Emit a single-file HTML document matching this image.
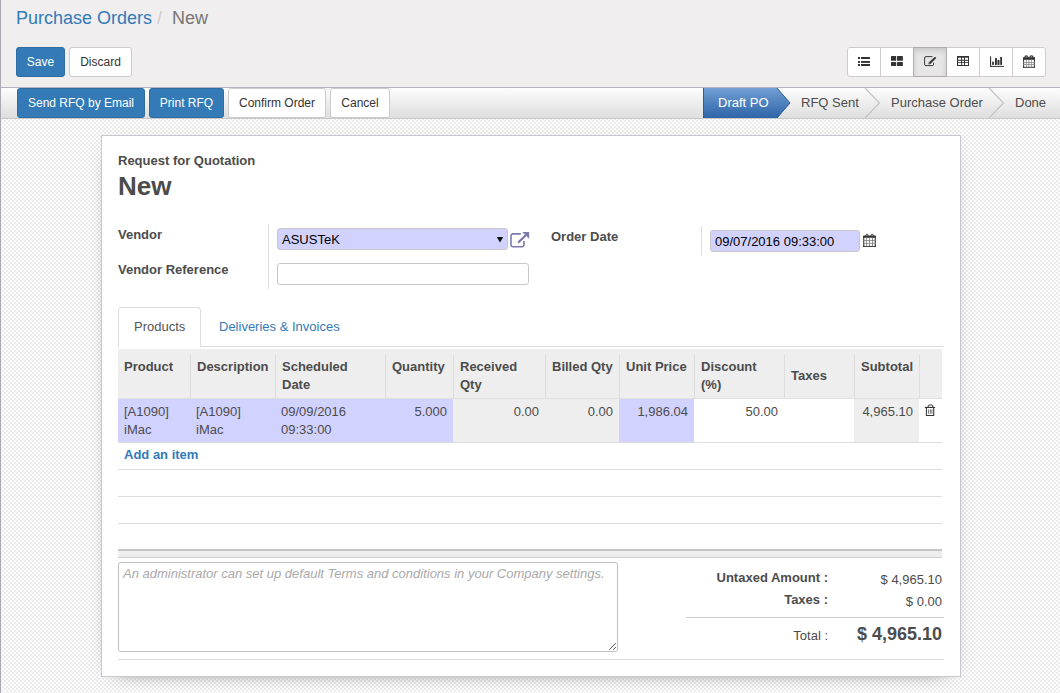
<!DOCTYPE html>
<html><head><meta charset="utf-8">
<style>
*{box-sizing:border-box;}
html,body{margin:0;padding:0;}
body{width:1060px;height:693px;overflow:hidden;position:relative;font-family:"Liberation Sans",sans-serif;font-size:13px;color:#4c4c4c;background:#fff;}
.a{position:absolute;}
.t{position:absolute;white-space:nowrap;line-height:18px;}
.b{font-weight:bold;}
.cp{left:1px;top:0;width:1059px;height:87px;background:#f0eeee;}
.leftb{left:0;top:0;width:1px;height:693px;background:#a9a9b1;}
.btn{position:absolute;height:30px;border:1px solid #ccc;border-radius:3px;font-size:12px;line-height:28px;text-align:center;white-space:nowrap;background:#fff;color:#333;}
.btnp{background:#337ab7;border-color:#2e6da4;color:#fff;}
.sbar{left:1px;top:88px;width:1059px;height:30px;background:linear-gradient(#fdfdfd,#dedede);}
.bg{left:1px;top:119px;width:1059px;height:574px;background-color:#fff;background-image:linear-gradient(45deg,#ebebeb 25%,transparent 25%,transparent 75%,#ebebeb 75%),linear-gradient(45deg,#ebebeb 25%,transparent 25%,transparent 75%,#ebebeb 75%);}
.sheet{left:101px;top:135px;width:860px;height:542px;background:#fff;border:1px solid #c8c8d3;box-shadow:0 5px 20px -15px #000;}
.inp{position:absolute;border:1px solid #c8c8c8;border-radius:3px;background:#fff;}
.req{background:#d2d2ff;}
.hl{position:absolute;height:1px;background:#ddd;}
.vl{position:absolute;width:1px;background:#ddd;}
.cell{position:absolute;}
.r{text-align:right;}
</style></head><body>
<div class="a leftb"></div>
<div class="a cp"></div>
<div class="a" style="left:1px;top:87px;width:1059px;height:1px;background:#b3b3bb"></div>
<!-- breadcrumb -->
<div class="t" style="left:16px;top:9px;font-size:18px;"><span style="color:#337ab7">Purchase Orders</span><span style="color:#ccc;padding:0 5px">/&nbsp;</span><span style="color:#777">New</span></div>
<div class="btn btnp" style="left:16px;top:47px;width:49px;">Save</div>
<div class="btn" style="left:69px;top:47px;width:63px;">Discard</div>
<!-- view switcher -->
<div class="a" style="left:847px;top:47px;width:199px;height:30px;border:1px solid #ccc;border-radius:3px;background:#fff;"></div>
<div class="a" style="left:913px;top:47px;width:34px;height:30px;background:#e6e6e6;border:1px solid #adadad;box-shadow:inset 0 3px 5px rgba(0,0,0,.125);"></div>
<div class="vl" style="left:880px;top:48px;height:28px;background:#ccc"></div>
<div class="vl" style="left:979px;top:48px;height:28px;background:#ccc"></div>
<div class="vl" style="left:1012px;top:48px;height:28px;background:#ccc"></div>
<svg class="a" style="left:0;top:0" width="1060" height="87" viewBox="0 0 1060 87">
 <g fill="#333">
  <!-- list -->
  <rect x="858" y="57" width="2" height="2"/><rect x="861" y="57" width="9" height="2"/>
  <rect x="858" y="61" width="2" height="1.9"/><rect x="861" y="61" width="9" height="1.9"/>
  <rect x="858" y="64" width="2" height="2"/><rect x="861" y="64" width="9" height="2"/>
  <!-- kanban -->
  <rect x="891" y="56" width="5.2" height="4.8" rx="0.5"/><rect x="897" y="56" width="5.9" height="4.8" rx="0.5"/>
  <rect x="891" y="62" width="5.2" height="4" rx="0.5"/><rect x="897" y="62" width="5.9" height="4" rx="0.5"/>
  <!-- edit -->
  <path d="M932.5 56.6H926a1.4 1.4 0 0 0-1.4 1.4v6.2a1.4 1.4 0 0 0 1.4 1.4h6.2a1.4 1.4 0 0 0 1.4-1.4V62.8" fill="none" stroke="#333" stroke-width="0.95"/>
  <path d="M935 56.7l1.3 1.3-6 6-2 0.5 0.5-2z"/>
  <circle cx="929.2" cy="63" r="0.45" fill="#ddd"/>
  <!-- table -->
  <rect x="957" y="56" width="12" height="1.7"/>
  <rect x="957" y="56" width="1.1" height="10"/><rect x="968" y="56" width="1" height="10"/>
  <rect x="957" y="65" width="12" height="1"/>
  <rect x="961.1" y="56" width="1" height="10"/><rect x="964" y="56" width="1" height="10"/>
  <rect x="957" y="59.8" width="12" height="1"/><rect x="957" y="62" width="12" height="0.8"/>
  <!-- chart -->
  <rect x="990" y="56.3" width="1.1" height="10.6"/><rect x="990" y="65.9" width="14" height="1"/>
  <rect x="992.1" y="61.7" width="1.8" height="3.2"/><rect x="995" y="58.1" width="1.9" height="6.8"/><rect x="997.5" y="59.9" width="2" height="5"/><rect x="1000.2" y="56.9" width="1.8" height="8"/>
  <!-- calendar -->
  <rect x="1023.1" y="57.2" width="11.8" height="2.5" rx="0.5"/>
  <rect x="1023.1" y="57.5" width="1" height="10.3"/><rect x="1033.9" y="57.5" width="1" height="10.3"/>
  <rect x="1023.1" y="66.8" width="11.8" height="1"/>
  <g fill="#888"><rect x="1023" y="62.1" width="12" height="0.8"/><rect x="1023" y="64.2" width="12" height="0.8"/>
  <rect x="1025.9" y="59.7" width="0.8" height="7.5"/><rect x="1028.5" y="59.7" width="0.8" height="7.5"/><rect x="1030.9" y="59.7" width="0.8" height="7.5"/></g>
  <path d="M1024.9 59.5V57.4a1.5 1.5 0 0 1 3 0V59.5M1030 59.5V57.4a1.5 1.5 0 0 1 3 0V59.5" fill="none" stroke="#333" stroke-width="1.2"/>
 </g>
</svg>
<!-- statusbar -->
<div class="a sbar"></div>
<div class="a" style="left:1px;top:118px;width:1059px;height:1px;background:#c8c8c8"></div>
<div class="btn btnp" style="left:17px;top:88px;width:128px;">Send RFQ by Email</div>
<div class="btn btnp" style="left:149px;top:88px;width:75px;">Print RFQ</div>
<div class="btn" style="left:228px;top:88px;width:98px;">Confirm Order</div>
<div class="btn" style="left:330px;top:88px;width:60px;">Cancel</div>
<svg class="a" style="left:0;top:88px" width="1060" height="30" viewBox="0 88 1060 30">
 <defs><linearGradient id="gp" x1="0" y1="0" x2="0" y2="1"><stop offset="0" stop-color="#729fd4"/><stop offset="1" stop-color="#2d64a7"/></linearGradient></defs>
 <path d="M703 88H777L790 103L777 118H703Z" fill="url(#gp)"/>
 <path d="M703.5 88V118" stroke="#2a5e9e" stroke-width="1"/>
 <path d="M777 88L790 103L777 118" fill="none" stroke="#2a5e9e" stroke-width="1"/>
 <path d="M865 88L879.5 103L865 118" fill="none" stroke="#c4c4c4" stroke-width="1.2"/>
 <path d="M989 88L1003.5 103L989 118" fill="none" stroke="#c4c4c4" stroke-width="1.2"/>
</svg>
<div class="t" style="left:718px;top:94px;color:#fff">Draft PO</div>
<div class="t" style="left:801px;top:94px;color:#4c4c4c">RFQ Sent</div>
<div class="t" style="left:891px;top:94px;color:#4c4c4c">Purchase Order</div>
<div class="t" style="left:1015px;top:94px;color:#4c4c4c">Done</div>

<!-- background -->
<div class="a bg" style="background-size:4px 4px;background-position:1px 1px,3px 3px;"></div>
<div class="a sheet"></div>

<div class="t b" style="left:118px;top:152px;">Request for Quotation</div>
<div class="t b" style="left:118px;top:171px;font-size:26px;line-height:30px;">New</div>

<!-- fields -->
<div class="t b" style="left:118px;top:226px;">Vendor</div>
<div class="t b" style="left:118px;top:261px;">Vendor Reference</div>
<div class="vl" style="left:268px;top:224px;height:65px;"></div>
<div class="inp req" style="left:277px;top:228px;width:231px;height:22px;"></div>
<div class="t" style="left:282px;top:231px;color:#000">ASUSTeK</div>
<svg class="a" style="left:490px;top:228px" width="44" height="24" viewBox="490 228 44 24">
 <path d="M496.8 236.9H503.2L500 242.4Z" fill="#111"/>
 <path d="M520.8 233.9H513.2a2 2 0 0 0-2.2 2.2V244.6a2 2 0 0 0 2.2 2.2H521.8a2 2 0 0 0 2.2-2.2V241" fill="none" stroke="#7c7bad" stroke-width="1.6"/>
 <path d="M522.2 231.9H529.1V238.8Z" fill="#7c7bad"/>
 <path d="M526.5 234.5L518.2 242.6" stroke="#7c7bad" stroke-width="2.2"/>
</svg>
<div class="inp" style="left:277px;top:263px;width:252px;height:22px;"></div>

<div class="t b" style="left:551px;top:228px;">Order Date</div>
<div class="vl" style="left:701px;top:226px;height:30px;"></div>
<div class="inp req" style="left:710px;top:230px;width:150px;height:22px;"></div>
<div class="t" style="left:715px;top:233px;color:#000">09/07/2016 09:33:00</div>
<svg class="a" style="left:858px;top:230px" width="24" height="22" viewBox="858 230 24 22">
 <g fill="#333">
 <rect x="863.2" y="235.6" width="12.6" height="2.2" rx="0.5"/>
 <rect x="863.2" y="236" width="1.1" height="10.9"/><rect x="874.7" y="236" width="1.1" height="10.9"/>
 <rect x="863.2" y="245.9" width="12.6" height="1" />
 <g fill="#777"><rect x="863.2" y="240.1" width="12.6" height="0.7"/><rect x="863.2" y="242.9" width="12.6" height="0.7"/>
 <rect x="866.3" y="237.6" width="0.8" height="8.5"/><rect x="869.2" y="237.6" width="0.8" height="8.5"/><rect x="872" y="237.6" width="0.8" height="8.5"/></g>
 <path d="M865.9 237.2V235.3a1.1 1.1 0 0 1 2.2 0V237.2M871.1 237.2V235.3a1.1 1.1 0 0 1 2.2 0V237.2" fill="none" stroke="#333" stroke-width="0.9"/>
 </g>
</svg>

<!-- tabs -->
<div class="hl" style="left:118px;top:346px;width:826px;"></div>
<div class="a" style="left:118px;top:307px;width:83px;height:40px;border:1px solid #ddd;border-bottom:none;border-radius:4px 4px 0 0;background:#fff;"></div>
<div class="t" style="left:134px;top:318px;color:#555">Products</div>
<div class="t" style="left:219px;top:318px;color:#337ab7">Deliveries &amp; Invoices</div>

<!-- table -->
<div class="a" style="left:118px;top:349px;width:824px;height:49px;background:#eee;"></div>
<div class="hl" style="left:118px;top:398px;width:824px;background:#e0e0e0"></div>
<div class="vl" style="left:190px;top:355px;height:43px;"></div>
<div class="vl" style="left:275px;top:355px;height:43px;"></div>
<div class="vl" style="left:385px;top:355px;height:43px;"></div>
<div class="vl" style="left:453px;top:355px;height:43px;"></div>
<div class="vl" style="left:545px;top:355px;height:43px;"></div>
<div class="vl" style="left:619px;top:355px;height:43px;"></div>
<div class="vl" style="left:694px;top:355px;height:43px;"></div>
<div class="vl" style="left:784px;top:355px;height:43px;"></div>
<div class="vl" style="left:854px;top:355px;height:43px;"></div>
<div class="vl" style="left:919px;top:355px;height:43px;"></div>
<div class="t b" style="left:124px;top:358px;">Product</div>
<div class="t b" style="left:197px;top:358px;">Description</div>
<div class="t b" style="left:282px;top:358px;">Scheduled<br>Date</div>
<div class="t b" style="left:392px;top:358px;">Quantity</div>
<div class="t b" style="left:460px;top:358px;">Received<br>Qty</div>
<div class="t b" style="left:552px;top:358px;">Billed Qty</div>
<div class="t b" style="left:626px;top:358px;">Unit Price</div>
<div class="t b" style="left:701px;top:358px;">Discount<br>(%)</div>
<div class="t b" style="left:791px;top:367px;">Taxes</div>
<div class="t b" style="left:861px;top:358px;">Subtotal</div>

<div class="a" style="left:118px;top:399px;width:335px;height:43px;background:#d2d2ff"></div>
<div class="a" style="left:453px;top:399px;width:166px;height:43px;background:#eee"></div>
<div class="a" style="left:619px;top:399px;width:75px;height:43px;background:#d2d2ff"></div>
<div class="a" style="left:854px;top:399px;width:65px;height:43px;background:#eee"></div>
<div class="hl" style="left:118px;top:442px;width:824px;"></div>
<div class="t" style="left:124px;top:403px;">[A1090]<br>iMac</div>
<div class="t" style="left:196px;top:403px;">[A1090]<br>iMac</div>
<div class="t" style="left:281px;top:403px;">09/09/2016<br>09:33:00</div>
<div class="t r" style="left:385px;top:403px;width:62px;">5.000</div>
<div class="t r" style="left:453px;top:403px;width:86px;">0.00</div>
<div class="t r" style="left:545px;top:403px;width:68px;">0.00</div>
<div class="t r" style="left:619px;top:403px;width:69px;">1,986.04</div>
<div class="t r" style="left:694px;top:403px;width:84px;">50.00</div>
<div class="t r" style="left:854px;top:403px;width:59px;">4,965.10</div>
<svg class="a" style="left:918px;top:400px" width="24" height="22" viewBox="918 400 24 22">
 <g fill="#333">
 <rect x="924.8" y="406.9" width="10.3" height="1.1"/>
 <path d="M928.2 407V406a1 1 0 0 1 1-1h2.6a1 1 0 0 1 1 1V407" fill="none" stroke="#333" stroke-width="1"/>
 <path d="M926.4 408V415.4H933.7V408" fill="none" stroke="#333" stroke-width="1.05"/>
 <rect x="928.3" y="409.4" width="0.8" height="4.4" fill="#555"/><rect x="929.9" y="409.4" width="0.8" height="4.4" fill="#555"/><rect x="931.5" y="409.4" width="0.8" height="4.4" fill="#555"/>
 </g>
</svg>

<div class="t b" style="left:124px;top:446px;color:#337ab7">Add an item</div>
<div class="hl" style="left:118px;top:469px;width:824px;"></div>
<div class="hl" style="left:118px;top:496px;width:824px;"></div>
<div class="hl" style="left:118px;top:523px;width:824px;"></div>
<div class="a" style="left:118px;top:549px;width:824px;height:2px;background:#c4c4c4"></div>
<div class="a" style="left:118px;top:551px;width:824px;height:6px;background:#eee"></div>
<div class="hl" style="left:118px;top:557px;width:824px;background:#d0d0d0"></div>

<!-- notes -->
<div class="inp" style="left:118px;top:562px;width:500px;height:90px;border-color:#c0c0c0"></div>
<div class="t" style="left:123px;top:565px;font-style:italic;color:#a9a9a9">An administrator can set up default Terms and conditions in your Company settings.</div>
<svg class="a" style="left:607px;top:641px" width="9" height="9" viewBox="0 0 9 9"><path d="M8.8 2.2L2.2 8.8M8.8 6.2L6.2 8.8" stroke="#555" stroke-width="1"/></svg>

<!-- totals -->
<div class="t b r" style="left:700px;top:569px;width:128px;">Untaxed Amount :</div>
<div class="t r" style="left:840px;top:571px;width:102px;">$ 4,965.10</div>
<div class="t b r" style="left:700px;top:591px;width:128px;">Taxes :</div>
<div class="t r" style="left:840px;top:593px;width:102px;">$ 0.00</div>
<div class="hl" style="left:686px;top:617px;width:258px;background:#ccc"></div>
<div class="t r" style="left:700px;top:627px;width:128px;">Total :</div>
<div class="t b r" style="left:830px;top:623px;width:112px;font-size:18px;line-height:22px;">$ 4,965.10</div>
<div class="hl" style="left:118px;top:659px;width:826px;"></div>
</body></html>
